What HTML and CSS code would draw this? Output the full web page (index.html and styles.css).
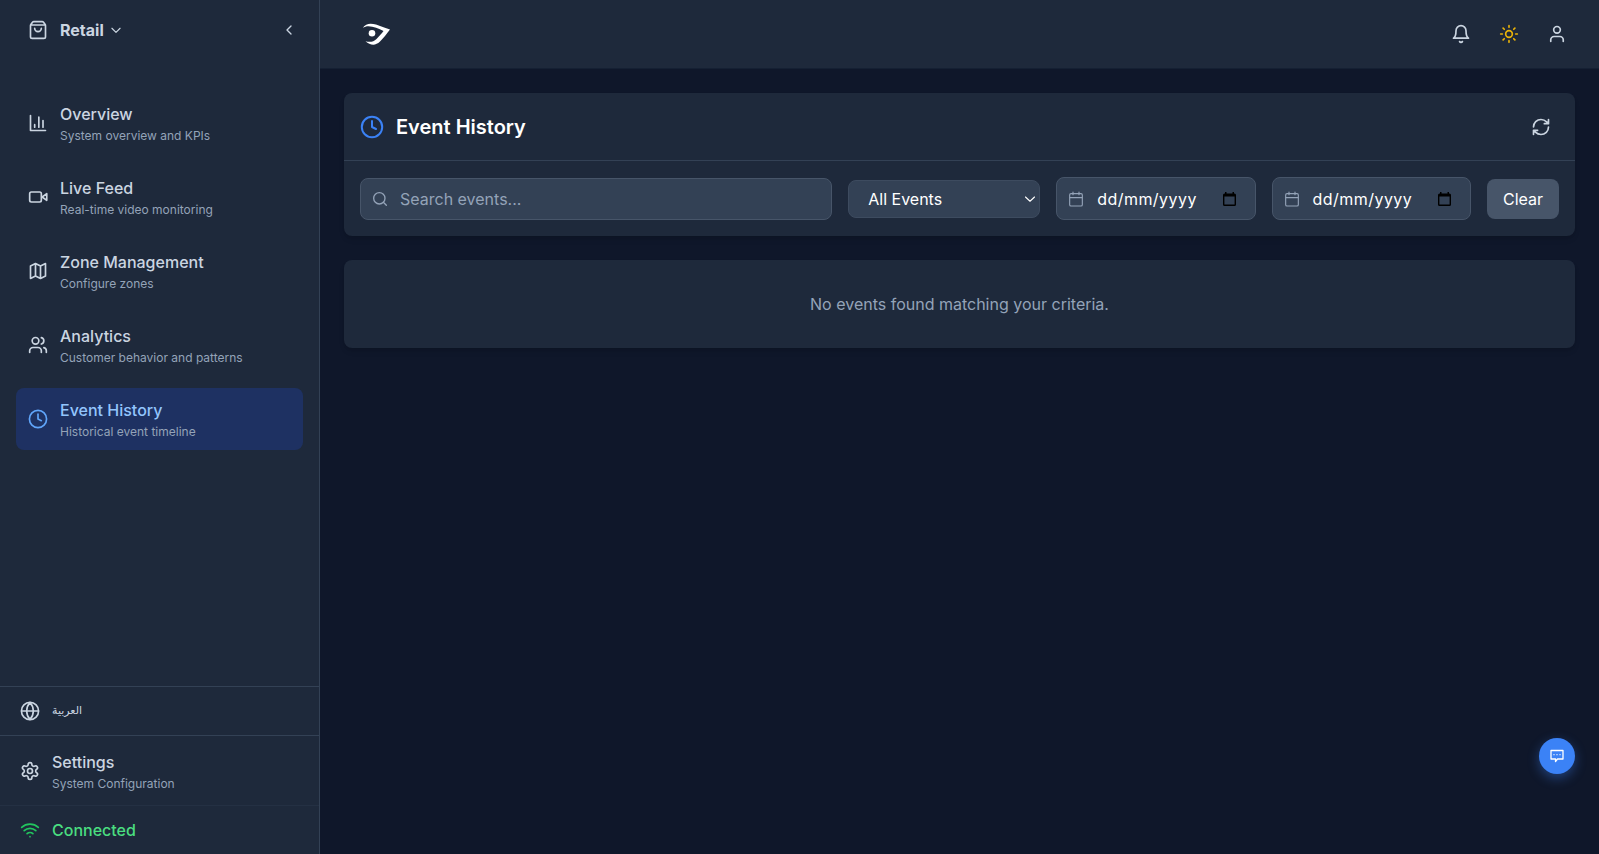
FILE: index.html
```html
<!DOCTYPE html>
<html lang="en">
<head>
<meta charset="utf-8">
<title>Event History</title>
<link rel="stylesheet" href="styles.css">
</head>
<body>
<div class="app">
  <aside class="sidebar">
    <div class="brand">
      <svg class="icon" viewBox="0 0 24 24"><path d="M3.4 5.467a2 2 0 0 0-.4 1.2V20a2 2 0 0 0 2 2h14a2 2 0 0 0 2-2V6.667a2 2 0 0 0-.4-1.2l-2-2.667A2 2 0 0 0 17 2H7a2 2 0 0 0-1.6.8zM3.1 6.034h17.8M16 10a4 4 0 0 1-8 0"/></svg>
      <span class="brand-name">Retail</span>
      <svg class="icon brand-caret" viewBox="0 0 24 24"><path d="m5 9 7 7 7-7"/></svg>
      <svg class="icon collapse" viewBox="0 0 24 24"><path d="m15 18-6-6 6-6"/></svg>
    </div>
    <nav class="nav">
      <a class="item"><svg class="icon" viewBox="0 0 24 24"><path d="M3 3v18h18M18 17V9M13 17V5M8 17v-3"/></svg>
        <span class="label"><b>Overview</b><small>System overview and KPIs</small></span></a>
      <a class="item"><svg class="icon" viewBox="0 0 24 24"><path d="m22.500 8-5.500 4 5.500 4V8Z"/><rect x="2" y="6" width="14" height="12" rx="2"/></svg>
        <span class="label"><b>Live Feed</b><small>Real-time video monitoring</small></span></a>
      <a class="item"><svg class="icon" viewBox="0 0 24 24"><path d="m3 6 6-3 6 3 6-3v15l-6 3-6-3-6 3zM9 3v15M15 6v15"/></svg>
        <span class="label"><b>Zone Management</b><small>Configure zones</small></span></a>
      <a class="item"><svg class="icon" viewBox="0 0 24 24"><path d="M16 21v-2a4 4 0 0 0-4-4H6a4 4 0 0 0-4 4v2M22 21v-2a4 4 0 0 0-3-3.87M16 3.13a4 4 0 0 1 0 7.75"/><circle cx="9" cy="7" r="4"/></svg>
        <span class="label"><b>Analytics</b><small>Customer behavior and patterns</small></span></a>
      <a class="item active"><svg class="icon" viewBox="0 0 24 24"><circle cx="12" cy="12" r="10.300"/><path d="M12 6v6l4 2"/></svg>
        <span class="label"><b>Event History</b><small>Historical event timeline</small></span></a>
    </nav>
    <div class="foot language"><svg class="icon" viewBox="0 0 24 24"><circle cx="12" cy="12" r="10.300"/><path d="M12 2a14.500 14.500 0 0 0 0 20 14.500 14.500 0 0 0 0-20M2 12h20"/></svg>
      <span class="arabic" lang="ar" dir="rtl">العربية</span></div>
    <div class="foot settings"><svg class="icon" viewBox="0 0 24 24"><path d="M12.22 2h-.44a2 2 0 0 0-2 2v.18a2 2 0 0 1-1 1.73l-.43.25a2 2 0 0 1-2 0l-.15-.08a2 2 0 0 0-2.73.73l-.22.38a2 2 0 0 0 .73 2.73l.15.1a2 2 0 0 1 1 1.72v.51a2 2 0 0 1-1 1.74l-.15.09a2 2 0 0 0-.73 2.73l.22.38a2 2 0 0 0 2.73.73l.15-.08a2 2 0 0 1 2 0l.43.25a2 2 0 0 1 1 1.73V20a2 2 0 0 0 2 2h.44a2 2 0 0 0 2-2v-.18a2 2 0 0 1 1-1.73l.43-.25a2 2 0 0 1 2 0l.15.08a2 2 0 0 0 2.73-.73l.22-.39a2 2 0 0 0-.73-2.73l-.15-.08a2 2 0 0 1-1-1.74v-.5a2 2 0 0 1 1-1.74l.15-.09a2 2 0 0 0 .73-2.73l-.22-.38a2 2 0 0 0-2.73-.73l-.15.08a2 2 0 0 1-2 0l-.43-.25a2 2 0 0 1-1-1.73V4a2 2 0 0 0-2-2z"/><circle cx="12" cy="12" r="3"/></svg>
      <span class="label"><b>Settings</b><small>System Configuration</small></span></div>
    <div class="foot status"><svg class="icon" viewBox="0 0 24 24"><path d="M2 8.820a15 15 0 0 1 20 0M5 12.859a10 10 0 0 1 14 0M8.500 16.429a5 5 0 0 1 7 0M12 20h.01"/></svg>
      <b>Connected</b></div>
  </aside>
  <div class="content">
    <header class="topbar">
      <svg class="logo" viewBox="0 0 28 22"><path d="M.8 4.800C4 0 9 0 14 1.600 18.500 3 23 5 28 6.500 24.500 11 21.500 15 18 18.600 13 23.400 8 22 3.500 18.200 8 19.600 11.500 18.800 14.500 16 17.500 13 19.500 10.500 21.500 8 15 4.500 6 1 .8 4.800Z"/><circle cx="10" cy="10.300" r="3.300"/></svg>
      <div class="actions">
        <svg class="icon" viewBox="0 0 24 24"><path d="M6 8a6 6 0 0 1 12 0c0 7 3 9 3 9H3s3-2 3-9M10.3 21a1.94 1.94 0 0 0 3.4 0"/></svg>
        <svg class="icon sun" viewBox="0 0 24 24"><circle cx="12" cy="12" r="4"/><path d="M12 2v2M12 20v2M4.930 4.930l1.410 1.410M17.660 17.660l1.410 1.410M2 12h2M20 12h2M6.340 17.660l-1.410 1.410M19.070 4.930l-1.410 1.410"/></svg>
        <svg class="icon" viewBox="0 0 24 24"><path d="M19.500 21v-2a4 4 0 0 0-4-4h-7a4 4 0 0 0-4 4v2"/><circle cx="12" cy="7" r="4"/></svg>
      </div>
    </header>
    <main class="main">
      <section class="card">
        <div class="card-head">
          <svg class="icon head-icon" viewBox="0 0 24 24"><circle cx="12" cy="12" r="10.200"/><path d="M12 6v6l4 2"/></svg>
          <h1>Event History</h1>
          <svg class="icon refresh" viewBox="0 0 24 24"><path d="M3 12a9 9 0 0 1 9-9 9.750 9.750 0 0 1 6.740 2.740L21 8M21 3v5h-5M21 12a9 9 0 0 1-9 9 9.750 9.750 0 0 1-6.740-2.740L3 16M8 16H3v5"/></svg>
        </div>
        <div class="filters">
          <div class="field search"><svg class="icon" viewBox="0 0 24 24"><circle cx="11" cy="11" r="8.500"/><path d="m21.500 21.500-4.500-4.500"/></svg><span>Search events...</span></div>
          <div class="field select"><span>All Events</span><svg class="icon" viewBox="0 0 24 24"><path d="m3 8 9 8.500L21 8"/></svg></div>
          <div class="field date"><svg class="icon" viewBox="0 0 24 24"><rect x="2.500" y="4" width="19" height="18.500" rx="2"/><path d="M7.500 1.500v4M16.500 1.500v4M3 10h18"/></svg><span>dd/mm/yyyy</span><svg class="picker" viewBox="0 0 13 14"><path fill-rule="evenodd" d="M2 0h1.500v1.500h6V0H11v1.500h.5A1.500 1.500 0 0 1 13 3v9.500a1.500 1.500 0 0 1-1.500 1.500h-10A1.500 1.500 0 0 1 0 12.500V3a1.500 1.500 0 0 1 1.500-1.500H2ZM1.400 4.500v8.100h10.200V4.500Z"/></svg></div>
          <div class="field date"><svg class="icon" viewBox="0 0 24 24"><rect x="2.500" y="4" width="19" height="18.500" rx="2"/><path d="M7.500 1.500v4M16.500 1.500v4M3 10h18"/></svg><span>dd/mm/yyyy</span><svg class="picker" viewBox="0 0 13 14"><path fill-rule="evenodd" d="M2 0h1.500v1.500h6V0H11v1.500h.5A1.500 1.500 0 0 1 13 3v9.500a1.500 1.500 0 0 1-1.500 1.500h-10A1.500 1.500 0 0 1 0 12.500V3a1.500 1.500 0 0 1 1.500-1.500H2ZM1.400 4.500v8.100h10.200V4.500Z"/></svg></div>
          <button class="clear">Clear</button>
        </div>
      </section>
      <section class="card empty">No events found matching your criteria.</section>
    </main>
  </div>
  <button class="chat" aria-label="Chat"><svg viewBox="0 0 14 14"><path d="M1 1.500h12v8.500H7.500L5.500 12.500V10H1Z"/><path d="M4 5.700h.01M7 5.700h.01M10 5.700h.01"/></svg></button>
</div>
</body>
</html>
```
FILE: styles.css
```css
* { box-sizing: border-box; }
body { margin: 0; background: #0f172a; color: #cbd5e1; font: 16px/24px Inter, sans-serif; }
.app { display: flex; height: 854px; overflow: hidden; }
.icon { width: 20px; height: 20px; flex: none; fill: none; stroke: currentColor; stroke-width: 2; stroke-linecap: round; stroke-linejoin: round; }

.sidebar { width: 320px; flex: none; display: flex; flex-direction: column; background: #1e293b; border-right: 1px solid #334155; }
.brand { display: flex; align-items: center; height: 60px; padding: 0 22px 0 28px; margin-bottom: 32px; }
.brand-name { margin-left: 12px; font-weight: 700; }
.brand .brand-caret { width: 14px; height: 14px; margin-left: 5px; }
.brand .collapse { width: 16px; height: 16px; margin-left: auto; }
.nav { flex: 1; display: flex; flex-direction: column; gap: 12px; padding: 0 16px; }
.item { display: flex; align-items: center; gap: 12px; height: 62px; padding: 0 12px; border-radius: 8px; }
.label { display: flex; flex-direction: column; gap: 2px; }
b { font-weight: 500; }
small { font-size: 12px; line-height: 16px; color: #94a3b8; }
.active { background: rgba(30, 58, 138, .5); color: #60a5fa; }
.active b { color: #93c5fd; }
.foot { display: flex; align-items: center; gap: 12px; padding: 0 20px; border-top: 1px solid #334155; }
.language { height: 49px; }
.arabic { font: 11px/18px "DejaVu Sans", sans-serif; }
.settings { height: 70px; }
.status { height: 49px; border-top-color: #243043; color: #4ade80; }
.status .icon { color: #22c55e; }

.content { flex: 1; min-width: 0; display: flex; flex-direction: column; }
.topbar { display: flex; align-items: center; justify-content: space-between; height: 69px; padding: 0 32px 1px 42px; background: #1e293b; border-bottom: 1px solid #152033; }
.logo { width: 28px; height: 22px; margin-top: 1px; fill: #fff; }
.actions { display: flex; gap: 28px; }
.sun { color: #eab308; }
.main { display: flex; flex-direction: column; gap: 24px; padding: 24px; }
.card { background: #1e293b; border-radius: 8px; box-shadow: 0 4px 6px -1px rgba(0, 0, 0, .1), 0 2px 4px -2px rgba(0, 0, 0, .1); }
.card-head { display: flex; align-items: center; height: 68px; padding: 0 24px 0 16px; border-bottom: 1px solid #334155; }
.head-icon { width: 24px; height: 24px; color: #3b82f6; }
h1 { margin: 0 auto 0 12px; color: #fff; font-size: 20px; line-height: 28px; font-weight: 600; }
.filters { display: flex; align-items: center; gap: 16px; padding: 16px; height: 75px; }
.field { display: flex; align-items: center; background: #334155; border: 1px solid #475569; border-radius: 8px; color: #fff; }
.field .icon { width: 16px; height: 16px; color: #94a3b8; }
.search { flex: 1; height: 42px; padding-left: 11px; gap: 12px; }
.search span { color: #94a3b8; }
.select { width: 192px; height: 38px; padding: 0 3px 0 19px; justify-content: space-between; border-color: #3d4b5f; }
.field.select .icon { width: 12px; height: 12px; color: #fff; stroke-width: 2.200; }
.date { width: 199.400px; height: 43px; padding: 0 19px 0 11px; }
.date .icon { stroke-width: 1.700; }
.date span { margin: 0 auto 0 13px; letter-spacing: .450px; }
.picker { width: 13px; height: 14px; fill: #000; }
.clear { width: 72px; height: 40px; padding: 0; border: 0; border-radius: 8px; background: #475569; color: #fff; font: inherit; }
.empty { height: 88px; padding: 32px; text-align: center; color: #94a3b8; }
.chat { position: fixed; right: 24px; top: 738px; width: 36px; height: 36px; padding: 11px; border: 0; border-radius: 50%; background: #3b82f6; box-shadow: 0 4px 12px rgba(59, 130, 246, .4); }
.chat svg { display: block; width: 14px; height: 14px; fill: none; stroke: #fff; stroke-width: 1.300; stroke-linecap: round; stroke-linejoin: round; }
```
